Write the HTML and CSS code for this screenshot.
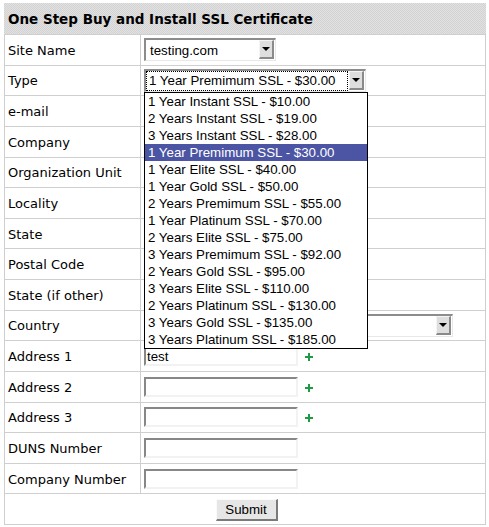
FILE: index.html
```html
<!DOCTYPE html>
<html>
<head>
<meta charset="utf-8">
<link rel="stylesheet" href="styles.css">
</head>
<body>
<div class="panel">
  <div class="header">One Step Buy and Install SSL Certificate</div>

  <div class="row">
    <div class="label">Site Name</div>
    <div class="field">
      <div class="sel sel-site"><span class="sel-text">testing.com</span><span class="sel-btn"><span class="arrow"></span></span></div>
    </div>
  </div>

  <div class="row row-type">
    <div class="label">Type</div>
    <div class="field">
      <div class="sel sel-type">
        <span class="sel-text focus">1 Year Premimum SSL - $30.00</span><span class="sel-btn"><span class="arrow"></span></span>
        <ul class="dropdown">
          <li>1 Year Instant SSL - $10.00</li>
          <li>2 Years Instant SSL - $19.00</li>
          <li>3 Years Instant SSL - $28.00</li>
          <li class="active">1 Year Premimum SSL - $30.00</li>
          <li>1 Year Elite SSL - $40.00</li>
          <li>1 Year Gold SSL - $50.00</li>
          <li>2 Years Premimum SSL - $55.00</li>
          <li>1 Year Platinum SSL - $70.00</li>
          <li>2 Years Elite SSL - $75.00</li>
          <li>3 Years Premimum SSL - $92.00</li>
          <li>2 Years Gold SSL - $95.00</li>
          <li>3 Years Elite SSL - $110.00</li>
          <li>2 Years Platinum SSL - $130.00</li>
          <li>3 Years Gold SSL - $135.00</li>
          <li>3 Years Platinum SSL - $185.00</li>
        </ul>
      </div>
    </div>
  </div>

  <div class="row"><div class="label">e-mail</div><div class="field"><div class="inp"></div></div></div>
  <div class="row"><div class="label">Company</div><div class="field"><div class="inp"></div></div></div>
  <div class="row"><div class="label">Organization Unit</div><div class="field"><div class="inp"></div></div></div>
  <div class="row"><div class="label">Locality</div><div class="field"><div class="inp"></div></div></div>
  <div class="row"><div class="label">State</div><div class="field"><div class="inp"></div></div></div>
  <div class="row"><div class="label">Postal Code</div><div class="field"><div class="inp"></div></div></div>
  <div class="row"><div class="label">State (if other)</div><div class="field"><div class="inp"></div></div></div>

  <div class="row">
    <div class="label">Country</div>
    <div class="field">
      <div class="sel sel-country"><span class="sel-text"></span><span class="sel-btn"><span class="arrow"></span></span></div>
    </div>
  </div>

  <div class="row">
    <div class="label">Address 1</div>
    <div class="field"><div class="inp">test</div><svg class="plus" width="8" height="8" viewBox="0 0 8 8"><rect x="3" y="0" width="2" height="8"/><rect x="0" y="3" width="8" height="2"/></svg></div>
  </div>
  <div class="row">
    <div class="label">Address 2</div>
    <div class="field"><div class="inp"></div><svg class="plus" width="8" height="8" viewBox="0 0 8 8"><rect x="3" y="0" width="2" height="8"/><rect x="0" y="3" width="8" height="2"/></svg></div>
  </div>
  <div class="row">
    <div class="label">Address 3</div>
    <div class="field"><div class="inp"></div><svg class="plus" width="8" height="8" viewBox="0 0 8 8"><rect x="3" y="0" width="2" height="8"/><rect x="0" y="3" width="8" height="2"/></svg></div>
  </div>
  <div class="row"><div class="label">DUNS Number</div><div class="field"><div class="inp"></div></div></div>
  <div class="row"><div class="label">Company Number</div><div class="field"><div class="inp"></div></div></div>

  <div class="row row-submit">
    <button class="submit">Submit</button>
  </div>
</div>
</body>
</html>
```

FILE: styles.css
```css
html, body {
  background: #ffffff;
}
body {
  margin: 3px 0 0 4px;
  font-family: "DejaVu Sans", Verdana, sans-serif;
  font-size: 13px;
  color: #000;
}
.panel {
  width: 482px;
  box-sizing: border-box;
  border: 1px solid #cfcfcf;
  border-top: none;
}
.header {
  height: 31px;
  box-sizing: border-box;
  margin-left: -1px;
  margin-right: -1px;
  padding-left: 4px;
  padding-top: 1px;
  display: flex;
  align-items: center;
  font-weight: bold;
  font-size: 13.5px;
  background-color: #dadada;
  background-image: repeating-conic-gradient(#d3d3d3 0 25%, #e1e1e1 0 50%);
  background-size: 2px 2px;
}
.row {
  display: grid;
  grid-template-columns: 136px 1fr;
  height: 30.625px;
  box-sizing: border-box;
  border-top: 1px solid #cfcfcf;
}
.label {
  display: flex;
  align-items: center;
  padding-left: 3px;
  padding-top: 1px;
  border-right: 1px solid #cfcfcf;
  white-space: nowrap;
}
.field {
  display: flex;
  align-items: center;
  padding-left: 3px;
}
.row-type {
  position: relative;
  z-index: 5;
}
.sel {
  position: relative;
  display: flex;
  box-sizing: border-box;
  height: 23px;
  border-style: solid;
  border-width: 2px 1px 1px 2px;
  border-color: #8c8c8c #e8e8e8 #e8e8e8 #8c8c8c;
  background: #fff;
  font-family: "Liberation Sans", Arial, sans-serif;
  font-size: 13.3px;
}
.sel-site { width: 132px; }
.sel-type { width: 222px; }
.sel-country { width: 309px; }
.sel-text {
  flex: 1;
  display: flex;
  align-items: center;
  padding-left: 4px;
  white-space: nowrap;
  overflow: hidden;
}
.sel-text.focus {
  margin: 0 1px 0 0;
  padding-left: 2px;
  border: 1px dotted #000;
}
.sel-btn {
  width: 15px;
  box-sizing: border-box;
  margin: 0 1px 1px 0;
  background: #dedede;
  border-style: solid;
  border-width: 1px 2px 2px 1px;
  border-color: #f4f4f4 #8a8a8a #8a8a8a #f4f4f4;
  display: flex;
  align-items: center;
  justify-content: center;
}
.arrow {
  width: 0;
  height: 0;
  border-left: 4px solid transparent;
  border-right: 4px solid transparent;
  border-top: 4px solid #000;
}
.dropdown {
  position: absolute;
  left: -2px;
  top: calc(100% + 1px);
  width: 224px;
  box-sizing: border-box;
  margin: 0;
  padding: 0;
  list-style: none;
  border: 1px solid #000;
  background: #fff;
}
.dropdown li {
  height: 17px;
  line-height: 17px;
  padding-left: 3px;
  white-space: nowrap;
  color: #000;
}
.dropdown li.active {
  background: #4b55a3;
  color: #fff;
}
.inp {
  width: 154px;
  height: 20px;
  box-sizing: border-box;
  border-style: solid;
  border-width: 2px 2px 2px 2px;
  border-color: #878787 #f2f2f2 #f2f2f2 #878787;
  background: #fff;
  font-family: "Liberation Sans", Arial, sans-serif;
  font-size: 13.3px;
  line-height: 18px;
  padding-left: 1px;
}
.plus {
  margin-left: 7px;
  margin-top: 2px;
  fill: #1f9a45;
}
.row-submit {
  display: flex;
  align-items: center;
  justify-content: center;
  padding-left: 3px;
  padding-top: 1px;
}
.submit {
  width: 62px;
  height: 22px;
  box-sizing: border-box;
  padding: 0;
  background: #e6e6e6;
  border-style: solid;
  border-width: 1px 2px 2px 1px;
  border-color: #fafafa #7a7a7a #7a7a7a #fafafa;
  font-family: "Liberation Sans", Arial, sans-serif;
  font-size: 13.3px;
  color: #000;
}
```
